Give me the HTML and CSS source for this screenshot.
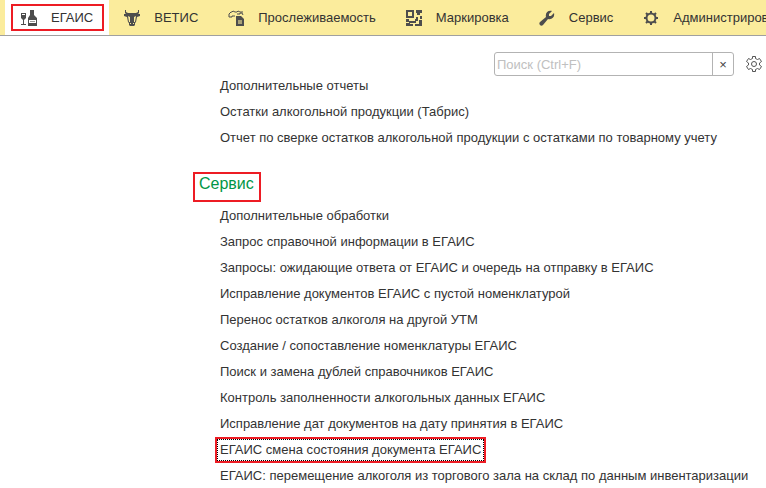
FILE: index.html
```html
<!DOCTYPE html>
<html lang="ru">
<head>
    <meta charset="UTF-8">
    <meta name="viewport" content="width=device-width, initial-scale=1.0">
    <title>ЕГАИС</title>
    <link rel="stylesheet" href="styles.css">
</head>
<body>
    <nav class="sections">
        <a href="#egais" class="section active framed">
            <svg class="icon" viewBox="0 0 16 16"><path d="M0 3h5v5L3 10v4h2v1H0v-1h2v-4L0 8zM9 0h4v5l3 3v8H7V8l2-3z"/><path class="cut" d="M1 4h3v1H1zM8 10h7v3H8z"/><path class="shade" d="M9 11h5v1H9z"/></svg>
            ЕГАИС
        </a>
        <a href="#vetis" class="section">
            <svg class="icon" viewBox="0 0 16 16"><path d="M1 0h1v2l2 1h8l2-1V0h1v3l-1 1h2v2l-3 1-1 5-1 1v2l-1 1H6l-1-1v-2l-1-1-1-5-3-1V4h2L1 3z"/><path class="hole" d="M4 6l2 1v5H5zM12 6l-2 1v5h1zM6 13h1v1H6zM9 13h1v1H9z"/></svg>
            ВЕТИС
        </a>
        <a href="#trace" class="section">
            <svg class="icon" viewBox="0 0 16 16"><path class="line" d="M7 6H4v1H1V4l2-2h1l1-1 2 1h2l1-1 2 1h3M9 4h3V3h2l1 2"/><path d="M8 6h5l3 3v7H8z"/><path class="fold" d="M10 10h4v4h-4z"/></svg>
            Прослеживаемость
        </a>
        <a href="#marking" class="section">
            <svg class="icon" viewBox="0 0 16 16"><path fill-rule="evenodd" d="M0 0h8v8H0zM2 2v4h4V2zM10 0h6v3h-2v2h-3V3h-1zM14 6h2v3h-2zM10 7h2v4h-2v2H6v-2h3V9h1zM0 9h3v2h3v2H3v-1H0zM0 13h4v1h3v2H0zM13 10h3v6H9v-2h4z"/></svg>
            Маркировка
        </a>
        <a href="#service" class="section">
            <svg class="icon" viewBox="0 0 16 16"><path d="M13 1l-3 3v2h2l3-3c1 4-2 7-6 6l-5 6c-2 2-5-1-3-3l6-5C6 3 9 0 13 1z"/></svg>
            Сервис
        </a>
        <a href="#admin" class="section">
            <svg class="icon" viewBox="0 0 16 16"><circle class="ring" cx="8" cy="8" r="4.500"/><path class="teeth" d="M8 1v3M8 12v3M1 8h3M12 8h3M3 3l2 2M11 11l2 2M3 13l2-2M11 5l2-2"/></svg>
            Администрирование
        </a>
    </nav>

    <main>
        <div class="toolbar">
            <form class="search">
                <input type="text" placeholder="Поиск (Ctrl+F)" aria-label="Поиск">
                <button type="reset" aria-label="Очистить">×</button>
            </form>
            <button type="button" class="settings" aria-label="Настройки">
                <svg viewBox="0 0 16 16"><path d="M6.500 .5h3v2l2 1 2-1 2 3-2 1.500v2l2 1.500-2 3-2-1-2 1v2h-3v-2l-2-1-2 1-2-3 2-1.500V7l-2-1.500 2-3 2 1 2-1z"/><circle cx="8" cy="8" r="2.500"/></svg>
            </button>
        </div>

        <div class="commands">
            <ul>
                <li><a href="#">Дополнительные отчеты</a></li>
                <li><a href="#">Остатки алкогольной продукции (Табрис)</a></li>
                <li><a href="#">Отчет по сверке остатков алкогольной продукции с остатками по товарному учету</a></li>
            </ul>
            <h2>Сервис</h2>
            <ul>
                <li><a href="#">Дополнительные обработки</a></li>
                <li><a href="#">Запрос справочной информации в ЕГАИС</a></li>
                <li><a href="#">Запросы: ожидающие ответа от ЕГАИС и очередь на отправку в ЕГАИС</a></li>
                <li><a href="#">Исправление документов ЕГАИС с пустой номенклатурой</a></li>
                <li><a href="#">Перенос остатков алкоголя на другой УТМ</a></li>
                <li><a href="#">Создание / сопоставление номенклатуры ЕГАИС</a></li>
                <li><a href="#">Поиск и замена дублей справочников ЕГАИС</a></li>
                <li><a href="#">Контроль заполненности алкогольных данных ЕГАИС</a></li>
                <li><a href="#">Исправление дат документов на дату принятия в ЕГАИС</a></li>
                <li><a href="#" class="selected">ЕГАИС смена состояния документа ЕГАИС</a></li>
                <li><a href="#">ЕГАИС: перемещение алкоголя из торгового зала на склад по данным инвентаризации</a></li>
            </ul>
        </div>
    </main>
</body>
</html>
```
FILE: styles.css
```css
* { box-sizing: border-box; }
body { margin: 0; font-family: "Liberation Sans", Arial, sans-serif; font-size: 13px; color: #333; background: #fff; overflow: hidden; }
a { color: inherit; text-decoration: none; }

.sections { display: flex; height: 36px; padding-left: 5px; background: #fbec9c; border-bottom: 1px solid #a0a0a0; overflow: hidden; }
.section { display: flex; flex: none; align-items: center; gap: 14px; padding: 0 15px; white-space: nowrap; }
.section.active { padding: 0 16px; background: #fff; }
.section.framed { position: relative; }
.section.framed::after { content: ""; position: absolute; top: 4px; right: 5px; bottom: 4px; left: 6px; border: 2px solid #ed1c24; }
.icon { width: 16px; height: 16px; fill: #4d4d4d; }
.icon .cut { fill: #fff; }
.icon .shade { fill: #999; }
.icon .hole { fill: #fbec9c; }
.icon .fold { fill: #aaa278; }
.icon .line { fill: none; stroke: #4d4d4d; }
.icon .ring, .icon .teeth { fill: none; stroke: #4d4d4d; stroke-width: 2; }

.toolbar { display: flex; justify-content: flex-end; align-items: center; gap: 12px; padding: 16px 4px 0; }
.search { display: flex; width: 240px; height: 24px; border: 1px solid #b3b3b3; border-radius: 3px; }
.search input { flex: 1; min-width: 0; padding: 0 2px; border: 0; outline: none; background: none; font: inherit; }
.search input::placeholder { color: #c0c0c0; }
.search button { width: 21px; padding: 0; border: 0; border-left: 1px solid #b3b3b3; background: none; color: #444; font: inherit; }
.settings { width: 16px; height: 16px; padding: 0; border: 0; background: none; }
.settings svg { display: block; fill: none; stroke: #555; }

.commands { padding-left: 193px; }
.commands ul { margin: 0; padding: 0 0 0 27px; list-style: none; }
.commands li { height: 26px; line-height: 20px; white-space: nowrap; }
.commands li a { display: inline-block; }
.commands h2 { width: fit-content; margin: 18px 0 4px; padding: 0 5px 6px 4px; border: 2px solid #ed1c24; color: #009646; font-size: 16px; font-weight: normal; line-height: 20px; }
.commands .selected { margin: -2px -3px; padding: 0 2px; border: 1px dotted #000; outline: 2px solid #ed1c24; }
```
